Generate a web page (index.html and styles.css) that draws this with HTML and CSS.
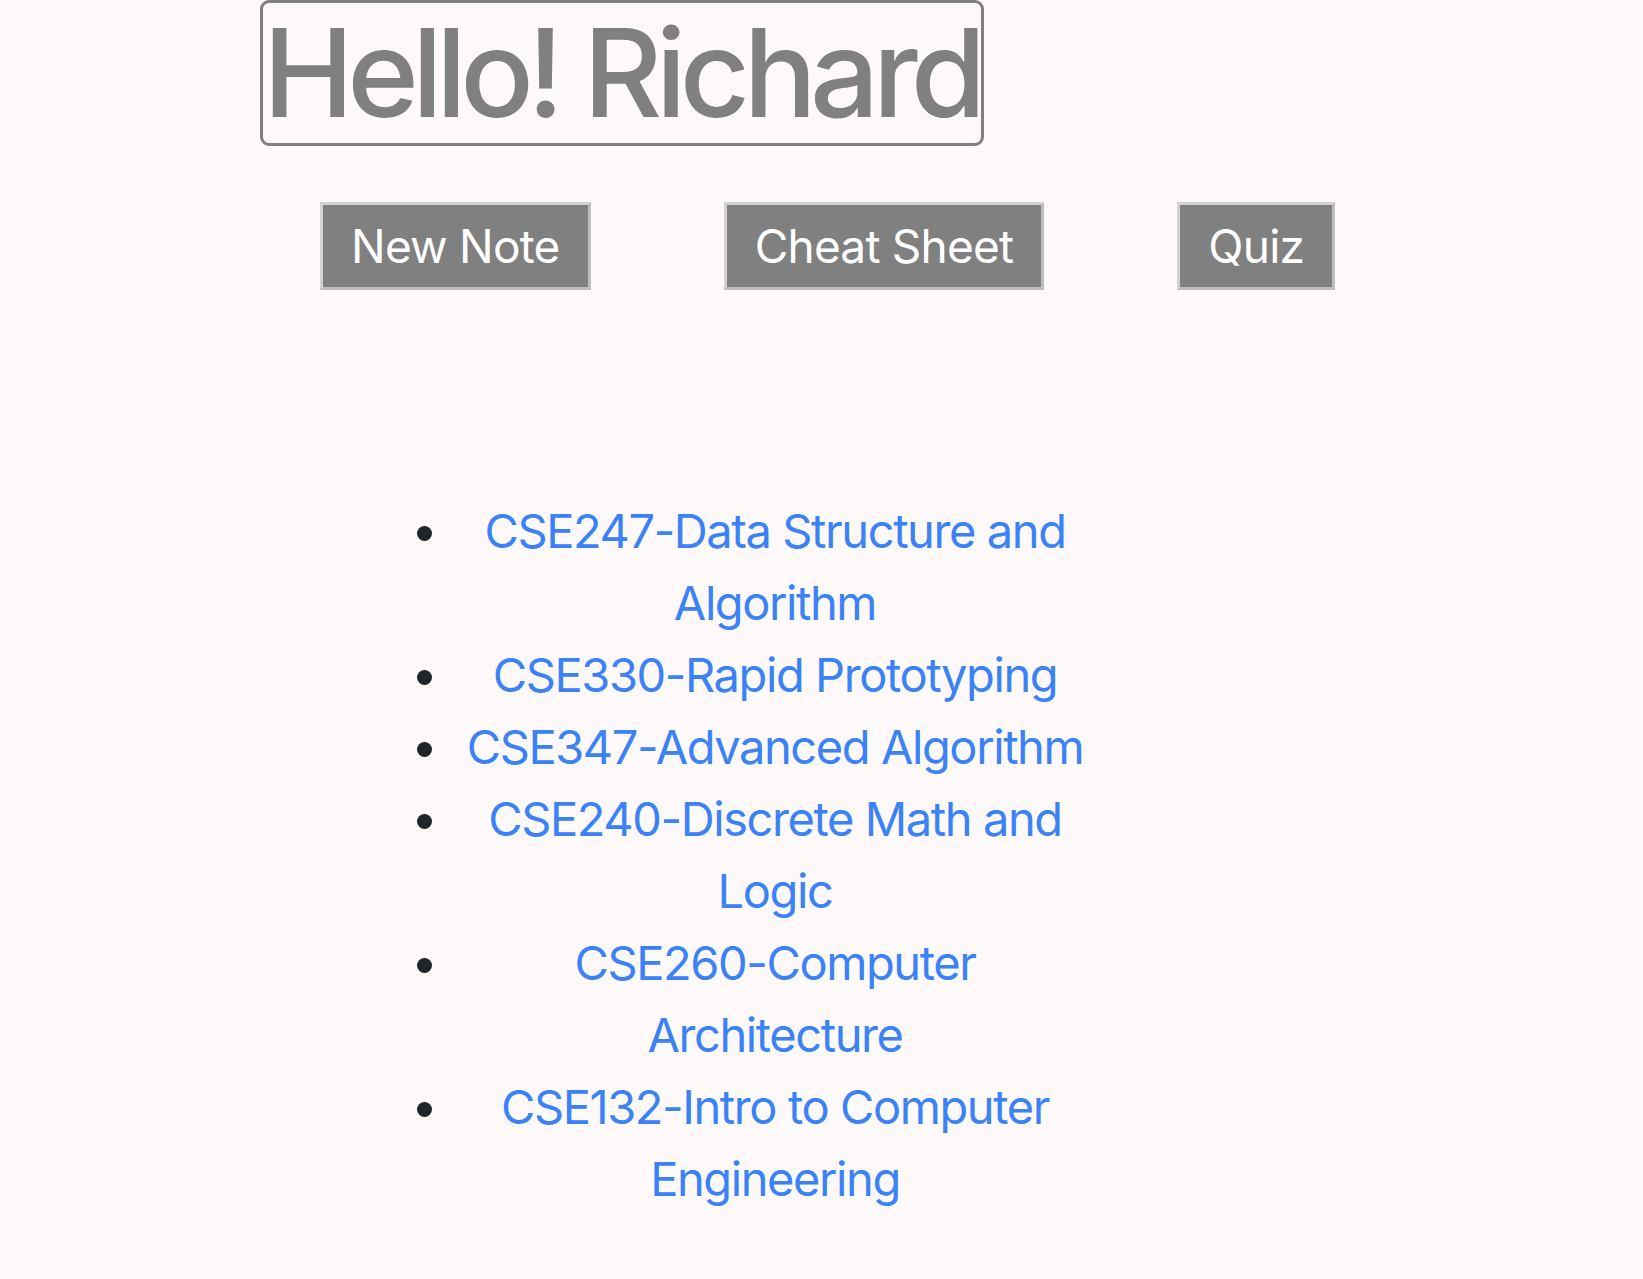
FILE: index.html
```html
<!DOCTYPE html>
<html lang="en">
<head>
<meta charset="utf-8">
<title>Notes</title>
<link rel="stylesheet" href="styles.css">
</head>
<body>
<main class="page">
  <header class="greeting-wrap">
    <h1 class="greeting">Hello! Richard</h1>
  </header>
  <nav class="actions">
    <button class="action-btn" type="button">New Note</button>
    <button class="action-btn" type="button">Cheat Sheet</button>
    <button class="action-btn" type="button">Quiz</button>
  </nav>
  <ul class="courses">
    <li class="course"><a class="course-link" href="#">CSE247-Data Structure and Algorithm</a></li>
    <li class="course"><a class="course-link" href="#">CSE330-Rapid Prototyping</a></li>
    <li class="course"><a class="course-link" href="#">CSE347-Advanced Algorithm</a></li>
    <li class="course"><a class="course-link" href="#">CSE240-Discrete Math and Logic</a></li>
    <li class="course"><a class="course-link" href="#">CSE260-Computer Architecture</a></li>
    <li class="course"><a class="course-link" href="#">CSE132-Intro to Computer Engineering</a></li>
  </ul>
</main>
</body>
</html>
```

FILE: styles.css
```css
* { box-sizing: border-box; }

html, body {
  margin: 0;
  padding: 0;
  background: #fdf9f8;
  color: #212529;
  font-family: Inter, "Noto Sans", sans-serif;
}

.page {
  padding-left: 260px;
}

.greeting-wrap {
  display: flex;
}

.greeting {
  margin: 0;
  width: 724px;
  height: 146px;
  border: 3px solid #808080;
  border-radius: 9px;
  padding: 0;
  color: #808080;
  font-size: 122px;
  font-weight: 500;
  line-height: 140px;
  letter-spacing: -0.055em;
  white-space: nowrap;
  overflow: visible;
}

.actions {
  display: flex;
  gap: 133px;
  margin-top: 56px;
  padding-left: 60px;
}

.action-btn {
  height: 88px;
  padding: 0 28px;
  background: #808080;
  color: #ffffff;
  border: 3px solid;
  border-color: #d3d3d3 #bdbdbd #bdbdbd #d3d3d3;
  font-family: Inter, "Noto Sans", sans-serif;
  font-size: 46px;
  letter-spacing: -0.017em;
  line-height: 1;
}

.courses {
  width: 642px;
  margin: 205px 0 0 194px;
  padding: 0;
  list-style: disc outside;
  text-align: center;
  font-size: 47px;
  line-height: 72px;
}

.course-link {
  color: #3b82f6;
  text-decoration: none;
  letter-spacing: -0.03em;
}
```
